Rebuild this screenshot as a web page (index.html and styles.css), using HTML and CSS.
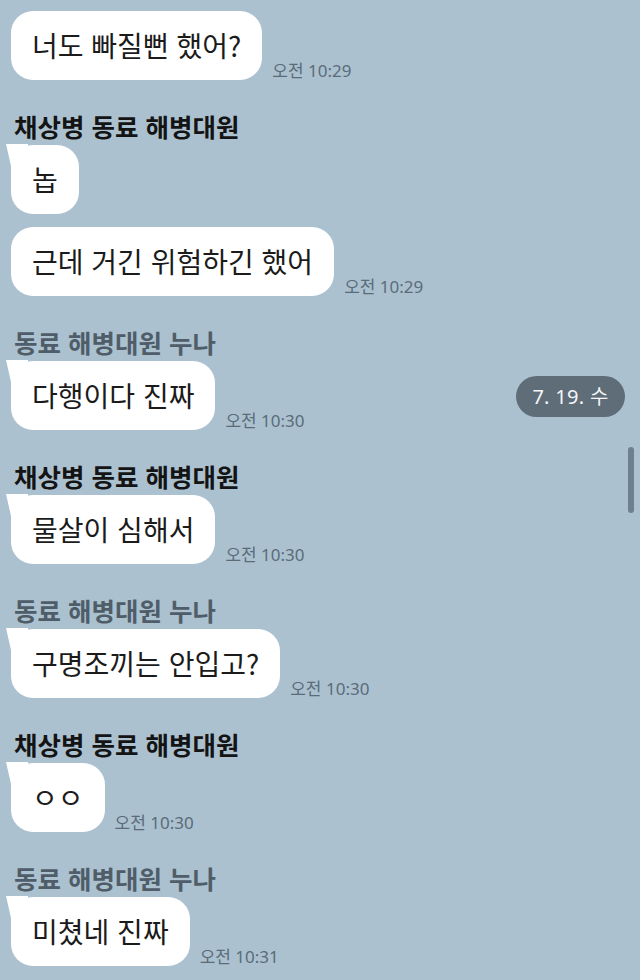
FILE: index.html
```html
<!DOCTYPE html>
<html lang="ko">

<head>
    <meta charset="UTF-8">
    <meta name="viewport" content="width=device-width, initial-scale=1.0">
    <link rel="stylesheet" href="styles.css">
    <title>채팅</title>
</head>

<body>

    <div class="chat">

        <div class="group">
            <div class="row">
                <div class="bubble">너도 빠질뻔 했어?</div>
                <span class="time">오전 10:29</span>
            </div>
        </div>

        <div class="group">
            <div class="name">채상병 동료 해병대원</div>
            <div class="row">
                <div class="bubble tail">놉</div>
            </div>
            <div class="row">
                <div class="bubble">근데 거긴 위험하긴 했어</div>
                <span class="time">오전 10:29</span>
            </div>
        </div>

        <div class="group">
            <div class="name other">동료 해병대원 누나</div>
            <div class="row">
                <div class="bubble tail">다행이다 진짜</div>
                <span class="time">오전 10:30</span>
            </div>
        </div>

        <div class="group">
            <div class="name">채상병 동료 해병대원</div>
            <div class="row">
                <div class="bubble tail">물살이 심해서</div>
                <span class="time">오전 10:30</span>
            </div>
        </div>

        <div class="group">
            <div class="name other">동료 해병대원 누나</div>
            <div class="row">
                <div class="bubble tail">구명조끼는 안입고?</div>
                <span class="time">오전 10:30</span>
            </div>
        </div>

        <div class="group">
            <div class="name">채상병 동료 해병대원</div>
            <div class="row">
                <div class="bubble tail">ㅇㅇ</div>
                <span class="time">오전 10:30</span>
            </div>
        </div>

        <div class="group">
            <div class="name other">동료 해병대원 누나</div>
            <div class="row">
                <div class="bubble tail">미쳤네 진짜</div>
                <span class="time">오전 10:31</span>
            </div>
        </div>

        <!-- 스크롤 중 떠 있는 날짜 -->
        <div class="date-pill">7. 19. 수</div>
        <div class="scrollbar"></div>
    </div>

</body>

</html>
```

FILE: styles.css
```css
body {
    margin: 0;
    padding: 0;
    background: #abc1d0;
    font-family: "Noto Sans CJK KR", "Noto Sans", sans-serif;
    color: #1b1b1b;
}

.chat {
    position: relative;
    min-height: 980px;
    padding: 11px 0 0 11px;
    box-sizing: border-box;
    overflow: hidden;
}

.group {
    display: flex;
    flex-direction: column;
    gap: 13px;
    margin-bottom: 32px;
}

.name {
    font-size: 25.5px;
    font-weight: 700;
    line-height: 28px;
    margin: 0 0 -8px 3px;
    color: #141414;
}

.name.other {
    color: #4f5d68;
}

.row {
    display: flex;
    align-items: flex-end;
}

.bubble {
    position: relative;
    background: #ffffff;
    border-radius: 22px;
    padding: 16px 21px;
    font-size: 28px;
    line-height: 37px;
    color: #1b1b1b;
}

.bubble.tail::before {
    content: "";
    position: absolute;
    left: -5px;
    top: -1px;
    width: 22px;
    height: 22px;
    background: #ffffff;
    clip-path: polygon(0 0, 100% 0, 100% 100%, 5px 100%);
}

.time {
    font-family: "Noto Sans", "Noto Sans CJK KR", sans-serif;
    font-size: 17px;
    line-height: 20px;
    color: #5b6c79;
    margin-left: 10px;
    margin-bottom: -1px;
}

.date-pill {
    position: absolute;
    left: 516px;
    top: 376px;
    width: 109px;
    height: 41px;
    border-radius: 21px;
    background: #5e6d78;
    color: #f4f6f8;
    font-family: "Noto Sans", "Noto Sans CJK KR", sans-serif;
    font-size: 20px;
    line-height: 41px;
    text-align: center;
    letter-spacing: 0.3px;
}

.scrollbar {
    position: absolute;
    left: 628px;
    top: 447px;
    width: 6px;
    height: 66px;
    border-radius: 3px;
    background: #6d808d;
}
```
